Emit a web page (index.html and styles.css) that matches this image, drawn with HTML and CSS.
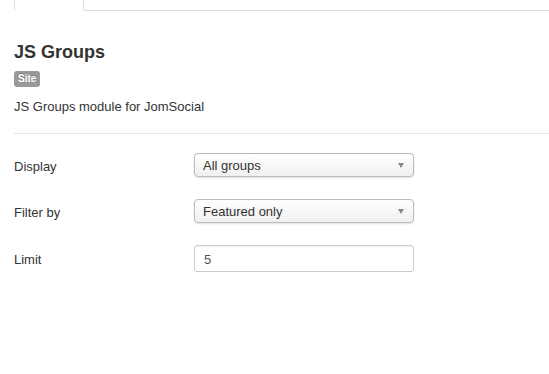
FILE: index.html
```html
<!DOCTYPE html>
<html>
<head>
<meta charset="utf-8">
<link rel="stylesheet" href="styles.css">
</head>
<body>
<div class="page">
  <ul class="tabs">
    <li class="tab active"><a>Module</a></li>
    <li class="tab second"><a class="link">Menu Assignment</a></li>
  </ul>
  <h2 class="title">JS Groups</h2>
  <span class="badge">Site</span>
  <p class="desc">JS Groups module for JomSocial</p>
  <hr class="rule">
  <div class="form">
    <div class="row">
      <label class="label">Display</label>
      <div class="select"><span>All groups</span><i class="caret"></i></div>
    </div>
    <div class="row">
      <label class="label">Filter by</label>
      <div class="select"><span>Featured only</span><i class="caret"></i></div>
    </div>
    <div class="row">
      <label class="label">Limit</label>
      <div class="input">5</div>
    </div>
  </div>
</div>
</body>
</html>
```
FILE: styles.css
```css
html, body { margin: 0; padding: 0; background: #fff; }
body {
  font-family: "Liberation Sans", Arial, sans-serif;
  font-size: 13px;
  color: #333;
  overflow: hidden;
}
.page { padding-left: 14px; }
.tabs {
  list-style: none;
  margin: -27px 0 0 0;
  padding: 0;
  display: flex;
  border-bottom: 1px solid #ddd;
}
.tab { margin-bottom: -1px; }
.tab a {
  display: block;
  padding: 8px 12px;
  line-height: 20px;
  border: 1px solid transparent;
  color: #555;
}
.tab.active a {
  width: 44px;
  background: #fff;
  border-color: #ddd #ddd transparent;
}
.tab.second { margin-left: 14px; }
.tab .link { color: #08c; }
.title {
  margin: 30px 0 0 0;
  font-size: 18px;
  font-weight: bold;
  line-height: 22px;
  color: #333;
}
.badge {
  display: inline-block;
  margin-top: 8px;
  padding: 2px 4px;
  background: #999;
  color: #fff;
  font-size: 10px;
  font-weight: bold;
  line-height: 12px;
  border-radius: 3px;
  text-shadow: 0 -1px 0 rgba(0,0,0,.25);
}
.desc { margin: 11px 0 0 0; line-height: 18px; }
.rule {
  margin: 17px 0 0 0;
  border: 0;
  border-top: 1px solid #e5e5e5;
  border-bottom: 1px solid #fff;
}
.form { margin-top: 18px; }
.row {
  display: flex;
  align-items: center;
  margin-bottom: 22px;
}
.label { width: 180px; padding-top: 2px; }
.select {
  box-sizing: border-box;
  width: 220px;
  height: 24px;
  border: 1px solid #bbb;
  border-radius: 4px;
  background: linear-gradient(#fff, #f0f0f0);
  box-shadow: 0 1px 2px rgba(0,0,0,.12);
  display: flex;
  align-items: center;
  justify-content: space-between;
  padding: 1px 9px 0 8px;
  color: #333;
}
.caret {
  width: 0; height: 0;
  border-left: 3px solid transparent;
  border-right: 3px solid transparent;
  border-top: 5px solid #888;
}
.input {
  box-sizing: border-box;
  width: 220px;
  height: 27px;
  border: 1px solid #ccc;
  border-radius: 3px;
  box-shadow: inset 0 1px 1px rgba(0,0,0,.07);
  padding: 1px 9px 0;
  line-height: 25px;
  color: #555;
}
```
